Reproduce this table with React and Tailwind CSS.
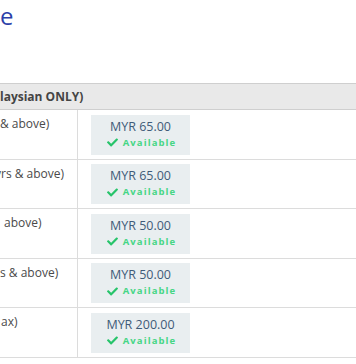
import { FaCheck } from "react-icons/fa";

const rows = [
  { label: "& above)", price: "MYR 65.00", shift: "ml-0" },
  { label: "yrs & above)", price: "MYR 65.00", shift: "-ml-[5px]" },
  { label: "above)", price: "MYR 50.00", shift: "ml-[4px]" },
  { label: "s & above)", price: "MYR 50.00", shift: "ml-0" },
  { label: "ax)", price: "MYR 200.00", shift: "ml-[1px]" },
];

const PriceBox = ({ price }) => (
  <div className="w-[99px] h-[40px] bg-[#e9eef0] flex flex-col items-center pt-[3px]">
    <span className="text-[12.5px] leading-[18px] text-[#3f5b78]">{price}</span>
    <span className="flex items-center gap-[5px] pl-[2px] text-[9.5px] leading-[14px] font-bold tracking-[1.1px] text-[#46d685]">
      <FaCheck size={11} className="text-[#27c46a]" />
      Available
    </span>
  </div>
);

export default function App() {
  return (
    <div className="w-[356px] h-[364px] bg-white overflow-hidden font-['Open_Sans',sans-serif]">
      <h1 className="text-[24px] leading-[32px] text-[#2d3fa8]">e</h1>

      <div className="mt-[51px] h-[27px] border-t border-b border-[#cfcfcf] bg-[#e9e9e9] flex items-center">
        <span className="text-[12px] font-bold text-[#444]">laysian ONLY)</span>
      </div>

      {rows.map((row) => (
        <div
          key={row.label}
          className="flex h-[49.5px] border-b border-[#dcdcdc]"
        >
          <div className="w-[78px] shrink-0 border-r border-[#dcdcdc] overflow-hidden pt-[5px]">
            <p className={`text-[12px] leading-[18px] text-[#4a4a4a] whitespace-nowrap ${row.shift}`}>
              {row.label}
            </p>
          </div>
          <div className="flex-1 pl-[13px] pt-[4.5px]">
            <PriceBox price={row.price} />
          </div>
        </div>
      ))}
    </div>
  );
}
